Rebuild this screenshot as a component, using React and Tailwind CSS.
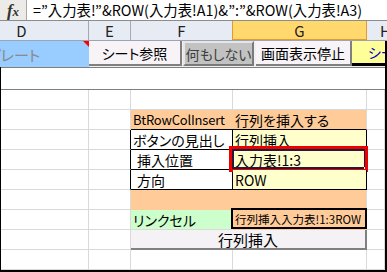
import React from "react";

const Cell = ({ className = "", children }) => (
  <div className={`h-full shrink-0 border-r border-b flex items-center ${className}`}>
    {children}
  </div>
);

const Lead = () => (
  <>
    <Cell className="w-[88px] border-[#d9d9d9]" />
    <Cell className="w-[42px] border-[#d9d9d9]" />
  </>
);

const BlankRow = () => (
  <div className="flex h-[20px]">
    <Lead />
    <Cell className="w-[102px] border-[#d9d9d9]" />
    <Cell className="w-[134px] border-[#d9d9d9]" />
    <Cell className="flex-1 border-[#d9d9d9]" />
  </div>
);

const TableRow = ({ label, value, indent, selected }) => (
  <div className="flex h-[20px]">
    <Cell className="w-[88px] border-[#d9d9d9]" />
    <Cell className="w-[42px] border-[#d9d9d9] border-r-black" />
    <Cell className={`w-[102px] bg-white border-black text-[14px] whitespace-nowrap ${indent ? "pl-[6px]" : "pl-[2px]"}`}>
      {label}
    </Cell>
    <Cell className="relative w-[134px] bg-[#ffffcc] border-black text-[14px] pl-[2px] whitespace-nowrap">
      {value}
      {selected && (
        <>
          <div className="absolute -left-[1px] -top-[1px] right-0 bottom-0 border-2 border-[#1c1c3c]" />
          <div className="absolute right-[-2px] bottom-[-2px] w-[4px] h-[4px] bg-[#1c1c3c] border border-white" />
          <div className="absolute -left-[4px] -top-[4px] -right-[2px] -bottom-[3px] border-[3px] border-[#ee0000]" />
        </>
      )}
    </Cell>
    <Cell className="flex-1 border-[#d9d9d9]" />
  </div>
);

export default function App() {
  return (
    <div className="w-[387px] h-[272px] overflow-hidden bg-white font-['Noto_Sans_CJK_JP',sans-serif] [font-feature-settings:'palt'] text-black leading-none">
      {/* formula bar */}
      <div className="flex h-[21px] border-b border-[#8c8c8c] bg-white">
        <div className="w-[27px] shrink-0 bg-[#ecebe8] border-r border-[#a8a8a8] flex items-center justify-center text-[#333]">
          <span className="font-['Liberation_Serif',serif] italic font-bold text-[17px]">f</span>
          <span className="font-['Liberation_Serif',serif] italic font-bold text-[13px] mt-[3px]">x</span>
        </div>
        <div className="pl-[6px] text-[14.4px] leading-[20px] whitespace-nowrap">
          =”入力表!”&amp;ROW(入力表!A1)&amp;”:”&amp;ROW(入力表!A3)
        </div>
      </div>

      {/* column headers */}
      <div className="flex h-[20px] bg-[#e7ebf3] border-b border-[#9da3b3] text-[15px] text-[#222]">
        <div className="w-[89px] shrink-0 border-r border-[#a4a9b8] flex items-center justify-center pr-[45px]">D</div>
        <div className="w-[42px] shrink-0 border-r border-[#a4a9b8] flex items-center justify-center">E</div>
        <div className="w-[102px] shrink-0 border-r border-[#e39b2f] flex items-center justify-center">F</div>
        <div className="w-[134px] shrink-0 border-r border-b border-[#e39b2f] bg-[#ffd96e] flex items-center justify-center">G</div>
        <div className="flex-1 flex items-center pl-[13px]">H</div>
      </div>

      <div className="border-r-2 border-black">
        {/* button row */}
        <div className="flex h-[26px] bg-[#f0f0f0] items-start">
          <div className="relative w-[89px] h-full shrink-0 bg-[#99ccff] overflow-hidden flex items-center">
            <span className="ml-[-13px] text-[15px] text-[#8a8a8a] whitespace-nowrap">プレート</span>
            <div className="absolute right-0 top-0 w-0 h-0 border-l-[6px] border-l-transparent border-t-[6px] border-t-[#ff0000]" />
          </div>
          <div className="w-[93px] h-[25px] shrink-0 bg-[#f7f3f7] border-r-2 border-b-2 border-[#808080] flex items-center justify-center text-[14px]">
            シート参照
          </div>
          <div className="w-[1px] shrink-0" />
          <div className="w-[71px] h-[25px] shrink-0 bg-[#c2c2c2] border-2 border-t-[#e6e6e6] border-l-[#e6e6e6] border-b-[#7a7a7a] border-r-[#7a7a7a] flex items-center justify-center text-[14px] text-[#404040]">
            何もしない
          </div>
          <div className="w-[2px] shrink-0" />
          <div className="w-[96px] h-[25px] shrink-0 bg-[#f7f3f7] border-r-2 border-b-2 border-[#808080] flex items-center justify-center text-[14px]">
            画面表示停止
          </div>
          <div className="w-[33px] h-[25px] shrink-0 bg-[#ffff99] border-b-[3px] border-black overflow-hidden flex items-center pl-[16px] text-[14px] text-[#0000cc] whitespace-nowrap">
            シート参照
          </div>
        </div>

        <div className="border-l border-black">
          {/* spacer row */}
          <div className="h-[23px] border-t border-b border-[#7f7f7f]" />

          <BlankRow />

          {/* title row */}
          <div className="flex h-[20px]">
            <Lead />
            <Cell className="w-[236px] bg-[#ffcc99] border-r-[#d9d9d9] border-b-black text-[14px] whitespace-nowrap">
              <div className="w-[101px] pl-[2px] text-[13px] tracking-[-0.2px]">BtRowColInsert</div>
              <div className="pl-[3px]">行列を挿入する</div>
            </Cell>
            <Cell className="flex-1 border-[#d9d9d9]" />
          </div>

          <TableRow label="ボタンの見出し" value="行列挿入" />
          <TableRow label="挿入位置" value="入力表!1:3" indent selected />
          <TableRow label="方向" value="ROW" indent />

          {/* orange spacer */}
          <div className="flex h-[20px]">
            <Lead />
            <Cell className="w-[236px] bg-[#ffcc99] border-r-[#d9d9d9] border-b-[#ffcc99]" />
            <Cell className="flex-1 border-[#d9d9d9]" />
          </div>

          {/* link cell */}
          <div className="flex h-[20px]">
            <Lead />
            <Cell className="w-[102px] bg-[#ccffcc] border-r-[#ccffcc] border-b-[#d9d9d9] text-[14px] pl-[2px] whitespace-nowrap">
              リンクセル
            </Cell>
            <Cell className="relative w-[134px] bg-[#ffcc99] border-[#ffcc99] text-[11.5px] pl-[2px] whitespace-nowrap">
              行列挿入入力表!1:3ROW
              <div className="absolute -left-[2px] -top-[2px] -right-[1px] bottom-0 border-2 border-black" />
            </Cell>
            <Cell className="flex-1 border-[#d9d9d9]" />
          </div>

          {/* insert button */}
          <div className="flex h-[20px]">
            <Lead />
            <Cell className="w-[236px] bg-[#f5f2f6] border-r-2 border-b-2 border-[#808080] justify-center text-[15px]">
              行列挿入
            </Cell>
            <Cell className="flex-1 border-[#d9d9d9]" />
          </div>

          <BlankRow />
        </div>
      </div>
      <div className="h-[2px] bg-black" />
    </div>
  );
}
